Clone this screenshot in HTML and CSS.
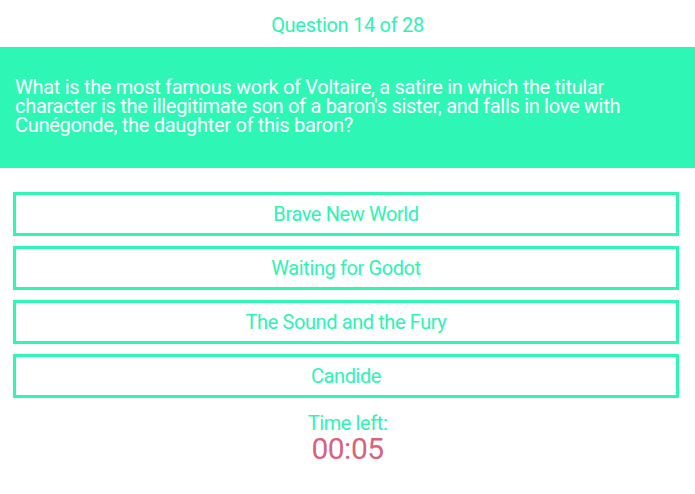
FILE: index.html
```html
<!DOCTYPE html>
<html>
<head>
<meta charset="utf-8">
<link rel="stylesheet" href="styles.css">
</head>
<body>
<div class="header">Question 14 of 28</div>
<div class="question">What is the most famous work of Voltaire, a satire in which the titular character is the illegitimate son of a baron's sister, and falls in love with Cunégonde, the daughter of this baron?</div>
<div class="answers">
  <div class="answer">Brave New World</div>
  <div class="answer">Waiting for Godot</div>
  <div class="answer">The Sound and the Fury</div>
  <div class="answer">Candide</div>
</div>
<div class="timer">
  <div class="timer-label">Time left:</div>
  <div class="timer-value">00:05</div>
</div>
</body>
</html>
```
FILE: styles.css
```css
html, body {
  margin: 0;
  padding: 0;
  background: #ffffff;
  font-family: Roboto, "Liberation Sans", sans-serif;
}
.header {
  height: 47px;
  display: flex;
  align-items: center;
  justify-content: center;
  color: #2ef3b4;
  font-size: 20px;
  letter-spacing: -0.3px;
  padding-top: 3px;
  box-sizing: border-box;
}
.question {
  background: #2ef7b5;
  color: #ffffff;
  font-size: 20px;
  letter-spacing: -0.3px;
  line-height: 19px;
  height: 121px;
  box-sizing: border-box;
  padding: 31px 40px 0 15px;
}
.answers {
  display: flex;
  flex-direction: column;
  gap: 10px;
  margin: 24px 16px 0 13px;
}
.answer {
  height: 44px;
  box-sizing: border-box;
  border: 3px solid #2ef7b5;
  display: flex;
  align-items: center;
  justify-content: center;
  color: #2ef3b4;
  font-size: 20px;
  letter-spacing: -0.4px;
}
.timer {
  display: flex;
  flex-direction: column;
  align-items: center;
  margin-top: 14px;
}
.timer-label {
  color: #2ef3b4;
  font-size: 20px;
  letter-spacing: -0.4px;
  line-height: 23px;
}
.timer-value {
  color: #d9627c;
  font-size: 30px;
  letter-spacing: -0.5px;
  line-height: 27px;
}
```
